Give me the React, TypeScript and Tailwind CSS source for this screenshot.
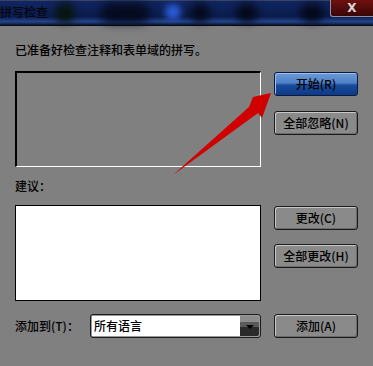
import React from 'react';

const font = { fontFamily: '"Noto Sans CJK SC", "Noto Sans", sans-serif' };

function GrayButton({ label, className = '' }: { label: string; className?: string }) {
  return (
    <div
      className={`h-6 w-[84px] rounded-[3px] border border-[#1a1a1a] bg-[#8a8a8a] shadow-[inset_1px_1px_0_#c8c8c8,inset_-1px_-1px_0_#6a6a6a] flex items-center justify-center text-[12px] font-medium text-black ${className}`}
    >
      {label}
    </div>
  );
}

export default function App() {
  return (
    <div className="relative w-[373px] h-[366px] overflow-hidden bg-[#808080]" style={font}>
      {/* title bar */}
      <div className="relative h-[26px] border-t border-t-[#3a4460] border-b border-b-[#080808] bg-[linear-gradient(to_bottom,#102662_0%,#0b1c4c_65%,#24448a_86%,#0a1838_100%)]">
        <div className="absolute left-[55px] top-[2px] h-[20px] w-[20px] rounded-full bg-[#08140a] blur-[4px]" />
        <div className="absolute left-[100px] top-[2px] h-[20px] w-[50px] rounded-full bg-[#050a1e] blur-[5px]" />
        <div className="absolute left-[165px] top-[3px] h-[16px] w-[16px] rounded-full bg-[#2a5ad4] blur-[3px]" />
        <div className="absolute left-[190px] top-[3px] h-[18px] w-[20px] rounded-full bg-[#040818] blur-[4px]" />
        <div className="absolute left-[236px] top-[3px] h-[18px] w-[22px] rounded-full bg-[#040818] blur-[4px]" />
        <div className="absolute left-[300px] top-[3px] h-[18px] w-[24px] rounded-full bg-[#040818] blur-[4px]" />
        <div className="relative pt-[3px] text-[12px] leading-[16px] font-medium text-[#050510]">拼写检查</div>
        <div className="absolute right-0 top-[-1px] h-[17px] w-[43px] rounded-bl-[3px] border-l border-b border-[#8a90a8] bg-[linear-gradient(to_bottom,#701010,#3a0606)] flex items-center justify-center">
          <span className="text-[12px] leading-none font-bold text-[#d8d8d8]" style={{ fontFamily: '"DejaVu Sans", sans-serif' }}>X</span>
        </div>
      </div>

      <div className="px-[15px]">
        <div className="mt-[17px] text-[12px] leading-[14px] font-medium text-black">已准备好检查注释和表单域的拼写。</div>

        <div className="mt-[14px] flex gap-[13px]">
          <div className="h-[96px] w-[246px] border-t-2 border-l-2 border-t-black border-l-black border-b border-r border-b-white border-r-white bg-[#808080]" />
          <div className="flex flex-col pt-[1px] gap-[15px]">
            <div className="h-6 w-[84px] rounded-[3px] border border-[#0a1a40] bg-[linear-gradient(to_bottom,#6c9ad6_0%,#4f80c6_45%,#1a4c9c_55%,#0c3a86_100%)] shadow-[inset_1px_1px_0_#9cc0ee] flex items-center justify-center text-[12px] font-medium text-black">
              开始(R)
            </div>
            <GrayButton label="全部忽略(N)" />
          </div>
        </div>

        <div className="mt-[12px] text-[12px] leading-[14px] font-medium text-black">建议：</div>

        <div className="mt-[12px] flex gap-[13px]">
          <div className="h-[96px] w-[246px] border border-black bg-white" />
          <div className="flex flex-col pt-[1px] gap-[14px]">
            <GrayButton label="更改(C)" />
            <GrayButton label="全部更改(H)" />
          </div>
        </div>

        <div className="mt-[13px] flex items-center">
          <div className="w-[75px] text-[12px] font-medium text-black">添加到(T)：</div>
          <div className="h-6 w-[171px] rounded-[3px] border border-[#1a1a1a] bg-[#9a9a9a] p-[1px] flex">
            <div className="flex-1 bg-white flex items-center pl-[2px] text-[12px] font-medium text-black">所有语言</div>
            <div className="relative w-[19px] bg-[linear-gradient(to_bottom,#8c8c8c_0%,#8c8c8c_30%,#5a5a5a_30%,#5a5a5a_55%,#2a2a2a_55%,#2a2a2a_100%)] rounded-r-[2px]">
              <div className="absolute left-[6px] top-[9px] w-0 h-0 border-l-[4px] border-r-[4px] border-t-[4px] border-l-transparent border-r-transparent border-t-black" />
            </div>
          </div>
          <GrayButton label="添加(A)" className="ml-[13px]" />
        </div>
      </div>

      {/* red annotation arrow */}
      <svg className="absolute left-0 top-0 pointer-events-none" width="373" height="366" viewBox="0 0 373 366">
        <polygon points="173,175 249,107 253,97 271,93 262,118 258,113" fill="#d00000" />
      </svg>
    </div>
  );
}
